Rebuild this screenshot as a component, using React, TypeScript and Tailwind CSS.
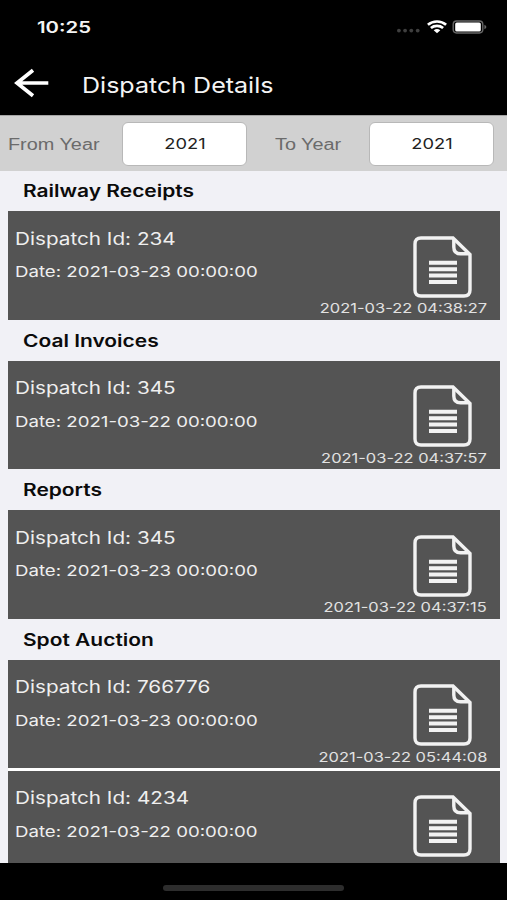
type Dispatch = {
  id: string
  date: string
  createdAt: string
}

interface SectionProps {
  title: string
  items: Dispatch[]
}

const sections: SectionProps[] = [
  {
    title: 'Railway Receipts',
    items: [
      { id: '234', date: '2021-03-23 00:00:00', createdAt: '2021-03-22 04:38:27' },
    ],
  },
  {
    title: 'Coal Invoices',
    items: [
      { id: '345', date: '2021-03-22 00:00:00', createdAt: '2021-03-22 04:37:57' },
    ],
  },
  {
    title: 'Reports',
    items: [
      { id: '345', date: '2021-03-23 00:00:00', createdAt: '2021-03-22 04:37:15' },
    ],
  },
  {
    title: 'Spot Auction',
    items: [
      { id: '766776', date: '2021-03-23 00:00:00', createdAt: '2021-03-22 05:44:08' },
      { id: '4234', date: '2021-03-22 00:00:00', createdAt: '' },
    ],
  },
]

const StatusBar = () => (
  <div className="flex h-[54px] shrink-0 items-center justify-between pl-[37px] pr-[19px]">
    <span className="origin-left scale-x-[1.27] text-[16px] font-semibold leading-5 text-[#f4f4f4]">
      10:25
    </span>
    <div className="flex items-center">
      <svg width="26" height="14" viewBox="0 0 26 14" fill="#3f3f3f">
        <circle cx="3.9" cy="10.6" r="1.9" />
        <circle cx="10.1" cy="10.6" r="1.9" />
        <circle cx="16.3" cy="10.6" r="1.9" />
        <circle cx="22.7" cy="10.6" r="1.9" />
      </svg>
      <svg
        className="ml-[6px]"
        width="20"
        height="14"
        viewBox="0 0 20 14"
        fill="none"
        stroke="#fff"
        strokeWidth="2.7"
      >
        <path d="M.9 4.7C6 .4 14 .4 19.1 4.7" />
        <path d="M3.9 8C7.3 5.2 12.7 5.2 16.1 8" />
        <path d="M6.7 10.3Q10 7.9 13.3 10.3L10 13.2Z" fill="#fff" stroke="none" />
      </svg>
      <svg className="ml-[5px]" width="36" height="14" viewBox="0 0 36 14">
        <rect x="1.2" y="1" width="29.6" height="12" rx="3.4" fill="none" stroke="#666" strokeWidth="1.4" />
        <rect x="3.2" y="2.4" width="25.6" height="9.2" rx="1.6" fill="#fff" />
        <path d="M32.4 4.8Q34.4 5.5 34.4 7T32.4 9.2Z" fill="#666" />
      </svg>
    </div>
  </div>
)

const Header = () => (
  <header className="flex h-[61px] shrink-0 items-center pl-[14px]">
    <svg
      className="mb-[4px]"
      width="36"
      height="30"
      viewBox="0 0 36 30"
      fill="none"
      stroke="#fff"
      strokeWidth="3.7"
    >
      <path d="M34.3 15H2.5M19 2.2L3 15L19 27.8" />
    </svg>
    <h1 className="ml-[32px] origin-left scale-x-[1.138] text-[22px] leading-7 text-[#f4f4f4]">
      Dispatch Details
    </h1>
  </header>
)

const YearButton = ({ value }: { value: string }) => (
  <button className="flex h-[44px] w-[125px] items-center justify-center rounded-[6px] border border-[#b8b8b8] bg-white pt-[2px] text-[15px] text-[#222]">
    <span className="scale-x-[1.22]">{value}</span>
  </button>
)

const YearFilter = () => (
  <div className="flex h-[56px] shrink-0 items-center border-t border-[#a5a5a5] bg-[#d1d1d1]">
    <div className="w-[115px] pl-[8px] pt-[2px] font-['Liberation_Sans',sans-serif] text-[16px] text-[#6b6b6b]">
      <span className="inline-block origin-left scale-x-[1.24] whitespace-nowrap">From Year</span>
    </div>
    <div className="ml-[7px]">
      <YearButton value="2021" />
    </div>
    <div className="ml-[28px] w-[94px] pt-[2px] font-['Liberation_Sans',sans-serif] text-[16px] text-[#6b6b6b]">
      <span className="inline-block origin-left scale-x-[1.24] whitespace-nowrap">To Year</span>
    </div>
    <YearButton value="2021" />
  </div>
)

const DocumentIcon = () => (
  <svg width="60" height="62" viewBox="0 0 60 62" fill="none" stroke="#f2f2f2" strokeWidth="3.4">
    <path d="M8 2H40L57 18.5V54Q57 60 51 60H8Q2 60 2 54V8Q2 2 8 2Z" />
    <path d="M40.8 3V11Q40.8 17.8 47.5 17.8H56" />
    <path d="M16 26.8H44M16 33.2H44M16 39.6H44M16 46H44" strokeWidth="4" />
  </svg>
)

const DispatchCard = ({ id, date, createdAt }: Dispatch) => (
  <div className="flex h-[108.7px] justify-between bg-[#545454] pl-[7px] pr-[13px] text-[#efefef]">
    <div className="flex flex-col items-start whitespace-nowrap pt-[15.5px]">
      <p className="origin-left scale-x-[1.218] text-[17px] leading-6">Dispatch Id: {id}</p>
      <p className="mt-[9.3px] origin-left scale-x-[1.243] text-[15px] leading-6">Date: {date}</p>
    </div>
    <div className="flex flex-col items-end pt-[24.6px]">
      <div className="mr-[14px]">
        <DocumentIcon />
      </div>
      <p className="mt-[0.2px] origin-right scale-x-[1.22] whitespace-nowrap text-[13.5px] leading-5 text-[#e2e2e2]">
        {createdAt}
      </p>
    </div>
  </div>
)

const Section = ({ title, items }: SectionProps) => (
  <section>
    <h2 className="flex h-[40.8px] items-center pl-[15px] pt-[2.4px] text-[17px] font-semibold text-[#0b0b0b]">
      <span className="origin-left scale-x-[1.232]">{title}</span>
    </h2>
    <div className="flex flex-col gap-[2.3px] bg-white">
      {items.map((item) => (
        <DispatchCard key={item.id} {...item} />
      ))}
    </div>
  </section>
)

export default function App() {
  return (
    <div className="flex h-[900px] w-[507px] flex-col overflow-hidden bg-black font-['Inter',sans-serif]">
      <StatusBar />
      <Header />
      <YearFilter />
      <main className="h-[692px] shrink-0 overflow-hidden bg-[#f1f1f6] pl-[8px] pr-[7px]">
        <div className="-mt-[0.5px]">
          {sections.map((section) => (
            <Section key={section.title} {...section} />
          ))}
        </div>
      </main>
      <div className="flex flex-1 justify-center pt-[22px]">
        <div className="h-[6px] w-[181px] rounded-full bg-[#2d2d2d]" />
      </div>
    </div>
  )
}
